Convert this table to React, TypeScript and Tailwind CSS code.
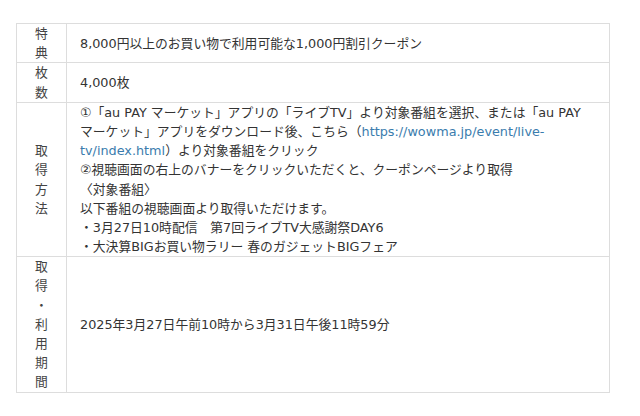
const rows: { label: string[]; content: React.ReactNode }[] = [
  {
    label: ['特', '典'],
    content: <p>8,000円以上のお買い物で利用可能な1,000円割引クーポン</p>,
  },
  {
    label: ['枚', '数'],
    content: <p>4,000枚</p>,
  },
  {
    label: ['取', '得', '方', '法'],
    content: (
      <div>
        <p>
          ①「au PAY マーケット」アプリの「ライブTV」より対象番組を選択、または「au PAY マーケット」アプリをダウンロード後、こちら（
          <a href="#" className="text-[#3a7cad]">
            https://wowma.jp/event/live-tv/index.html
          </a>
          ）より対象番組をクリック
        </p>
        <p>②視聴画面の右上のバナーをクリックいただくと、クーポンページより取得</p>
        <p>〈対象番組〉</p>
        <p>以下番組の視聴画面より取得いただけます。</p>
        <p>・3月27日10時配信　第7回ライブTV大感謝祭DAY6</p>
        <p>・大決算BIGお買い物ラリー 春のガジェットBIGフェア</p>
      </div>
    ),
  },
  {
    label: ['取', '得', '・', '利', '用', '期', '間'],
    content: <p>2025年3月27日午前10時から3月31日午後11時59分</p>,
  },
];

export default function App() {
  return (
    <div className="min-h-[416px] bg-white pt-[23px] pl-4 font-['DejaVu_Sans','Noto_Sans_CJK_JP',sans-serif] text-[0.8rem] leading-[1.5] text-[#333]">
      <div className="w-[594px] border border-[#ddd]">
        {rows.map((row, i) => (
          <div
            key={i}
            className={`grid grid-cols-[50px_1fr] ${i > 0 ? 'border-t border-[#ddd]' : ''}`}
          >
            <div className="flex flex-col items-center justify-center border-r border-[#ddd] text-[#444]">
              {row.label.map((ch, j) => (
                <span key={j}>{ch}</span>
              ))}
            </div>
            <div className="flex items-center px-[13px]">{row.content}</div>
          </div>
        ))}
      </div>
    </div>
  );
}
